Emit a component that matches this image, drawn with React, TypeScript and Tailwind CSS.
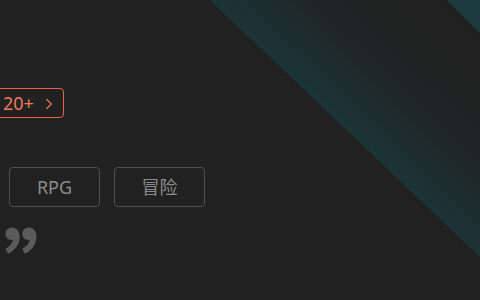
import { ChevronRight } from "lucide-react";

const tags = ["RPG", "冒险"];

export default function App() {
  return (
    <div className="relative h-[300px] w-[480px] overflow-hidden bg-[#212121] font-['Noto_Sans','Noto_Sans_CJK_SC',sans-serif]">
      {/* backdrop stripes */}
      <svg className="absolute inset-0" width="480" height="300" viewBox="0 0 480 300">
        <defs>
          <linearGradient id="band" gradientUnits="userSpaceOnUse" x1="300" y1="88" x2="400" y2="-16">
            <stop offset="0" stopColor="#1b3538" />
            <stop offset="1" stopColor="#212121" stopOpacity="0" />
          </linearGradient>
          <linearGradient id="corner" gradientUnits="userSpaceOnUse" x1="462" y1="16" x2="490" y2="-12">
            <stop offset="0" stopColor="#1d3d41" />
            <stop offset="1" stopColor="#1c3538" />
          </linearGradient>
        </defs>
        <polygon points="210,0 480,257 480,0" fill="url(#band)" />
        <polygon points="447,0 480,33 480,0" fill="url(#corner)" />
      </svg>

      <div className="relative flex flex-col pt-[88px]">
        <button className="-ml-[12px] flex h-[30px] w-[76px] items-center gap-[6px] rounded-[4px] border border-[#e2664a] pl-[14px] text-[18px] text-[#ee795b]">
          <span className="leading-none">20+</span>
          <ChevronRight size={18} strokeWidth={1.5} className="mt-[1px]" />
        </button>

        <div className="mt-[49px] flex gap-[14px] pl-[9px]">
          {tags.map((t) => (
            <span
              key={t}
              className="flex h-[40px] w-[91px] items-center justify-center rounded-[4px] border border-[#505050] text-[18px] text-[#8c8c8c]"
            >
              {t}
            </span>
          ))}
        </div>

        <div className="mt-[24px] pl-[4px] font-['Noto_Sans_CJK_SC',sans-serif] text-[80px] font-black leading-[60px] text-[#5b5b5b]">
          ”
        </div>
      </div>
    </div>
  );
}
